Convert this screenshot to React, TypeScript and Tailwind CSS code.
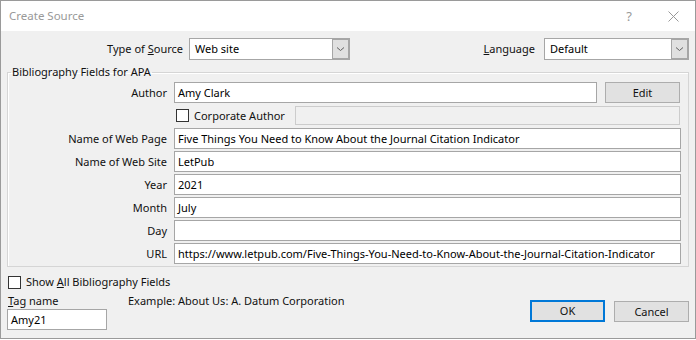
import { ReactNode } from "react";

const font = { fontFamily: '"Noto Sans", "Open Sans", sans-serif' };

const Chevron = () => (
  <svg width="9" height="6" viewBox="0 0 9 6" fill="none">
    <path d="M1 1.5 L4.5 4.5 L8 1.5" stroke="#606060" strokeWidth="1" />
  </svg>
);

const Select = ({ value, width }: { value: string; width: string }) => (
  <div className={`${width} h-[22px] flex bg-white border border-[#a6a6a6]`}>
    <div className="flex-1 pl-[5px] flex items-center text-black">{value}</div>
    <div className="w-[17px] h-full bg-[#e0e0e0] border border-[#a6a6a6] flex items-center justify-center">
      <Chevron />
    </div>
  </div>
);

const Input = ({ value = "", className = "" }: { value?: string; className?: string }) => (
  <div
    className={`h-[21px] shrink-0 min-w-0 bg-white border border-[#a6a6a6] pl-[3px] flex items-center whitespace-nowrap overflow-hidden text-black ${className}`}
  >
    {value}
  </div>
);

const Checkbox = () => <div className="w-[13px] h-[13px] shrink-0 bg-white border border-[#333]" />;

const Field = ({ label, children }: { label: string; children: ReactNode }) => (
  <div className="flex items-center h-[21px]">
    <div className="w-[159px] text-right shrink-0">{label}</div>
    <div className="ml-[7px] flex-1 min-w-0 flex items-center pr-[7px]">{children}</div>
  </div>
);

const Button = ({ label, primary = false }: { label: string; primary?: boolean }) => (
  <div
    className={`w-[75px] flex items-center justify-center bg-[#e1e1e1] ${
      primary ? "h-[22px] border-2 border-[#0078d7]" : "h-[21px] border border-[#adadad] mt-[1px]"
    }`}
  >
    {label}
  </div>
);

export default function App() {
  return (
    <div
      className="w-[696px] h-[340px] bg-white overflow-hidden text-[11px] leading-[16px] text-[#111]"
      style={font}
    >
      <div className="h-[339px] border border-[#9a9a9a] bg-[#f0f0f0] flex flex-col">
        {/* title bar */}
        <div className="h-[30px] bg-white flex items-center pl-[8px] pr-[16px] shrink-0">
          <div className="flex-1 text-[#999] text-[11.5px]">Create Source</div>
          <div className="text-[#999] text-[13px] mr-[36px]">?</div>
          <svg width="11" height="11" viewBox="0 0 11 11">
            <path d="M0.5 0.5 L10.5 10.5 M10.5 0.5 L0.5 10.5" stroke="#999" strokeWidth="1" />
          </svg>
        </div>

        {/* source type row */}
        <div className="flex items-center mt-[7px] pr-[6px]">
          <div className="w-[182px] text-right">
            Type of <span className="underline">S</span>ource
          </div>
          <div className="ml-[6px]">
            <Select value="Web site" width="w-[161px]" />
          </div>
          <div className="flex-1" />
          <div>
            <span className="underline">L</span>anguage
          </div>
          <div className="ml-[9px]">
            <Select value="Default" width="w-[145px]" />
          </div>
        </div>

        {/* bibliography fields */}
        <fieldset className="mt-[4px] ml-[6px] mr-[6px] border border-[#d5d5d5] shadow-[inset_1px_1px_0_#fff] pb-[2px] min-w-0">
          <legend className="ml-[3px] px-[1px]">Bibliography Fields for APA</legend>
          <div className="flex flex-col gap-[2px] mt-[2px]">
            <Field label="Author">
              <Input value="Amy Clark" className="w-[423px]" />
              <div className="ml-[8px]">
                <div className="w-[75px] h-[21px] flex items-center justify-center bg-[#e1e1e1] border border-[#adadad]">
                  Edit
                </div>
              </div>
            </Field>
            <div className="flex items-center h-[21px]">
              <div className="w-[159px] shrink-0" />
              <div className="ml-[9px] flex items-center whitespace-nowrap">
                <Checkbox />
                <span className="ml-[5px]">Corporate Author</span>
              </div>
              <div className="flex-1" />
              <div className="mr-[8px] w-[385px] h-[19px] border border-[#cccccc] bg-[#f0f0f0]" />
            </div>
            <Field label="Name of Web Page">
              <Input value="Five Things You Need to Know About the Journal Citation Indicator" className="w-[507px]" />
            </Field>
            <Field label="Name of Web Site">
              <Input value="LetPub" className="w-[507px]" />
            </Field>
            <Field label="Year">
              <Input value="2021" className="w-[507px]" />
            </Field>
            <Field label="Month">
              <Input value="July" className="w-[507px]" />
            </Field>
            <Field label="Day">
              <Input className="w-[507px]" />
            </Field>
            <Field label="URL">
              <Input
                value="https://www.letpub.com/Five-Things-You-Need-to-Know-About-the-Journal-Citation-Indicator"
                className="w-[507px]"
              />
            </Field>
          </div>
        </fieldset>

        {/* bottom */}
        <div className="flex items-center mt-[7px] ml-[7px]">
          <Checkbox />
          <span className="ml-[5px]">
            Show <span className="underline">A</span>ll Bibliography Fields
          </span>
        </div>
        <div className="flex mt-[3px] pr-[6px]">
          <div className="flex flex-col ml-[6px] w-[121px]">
            <div className="ml-[1px]">
              <span className="underline">T</span>ag name
            </div>
            <Input value="Amy21" className="w-[100px]" />
          </div>
          <div>Example: About Us: A. Datum Corporation</div>
          <div className="flex-1" />
          <div className="flex items-start gap-[9px] mt-[7px]">
            <Button label="OK" primary />
            <Button label="Cancel" />
          </div>
        </div>
      </div>
    </div>
  );
}
